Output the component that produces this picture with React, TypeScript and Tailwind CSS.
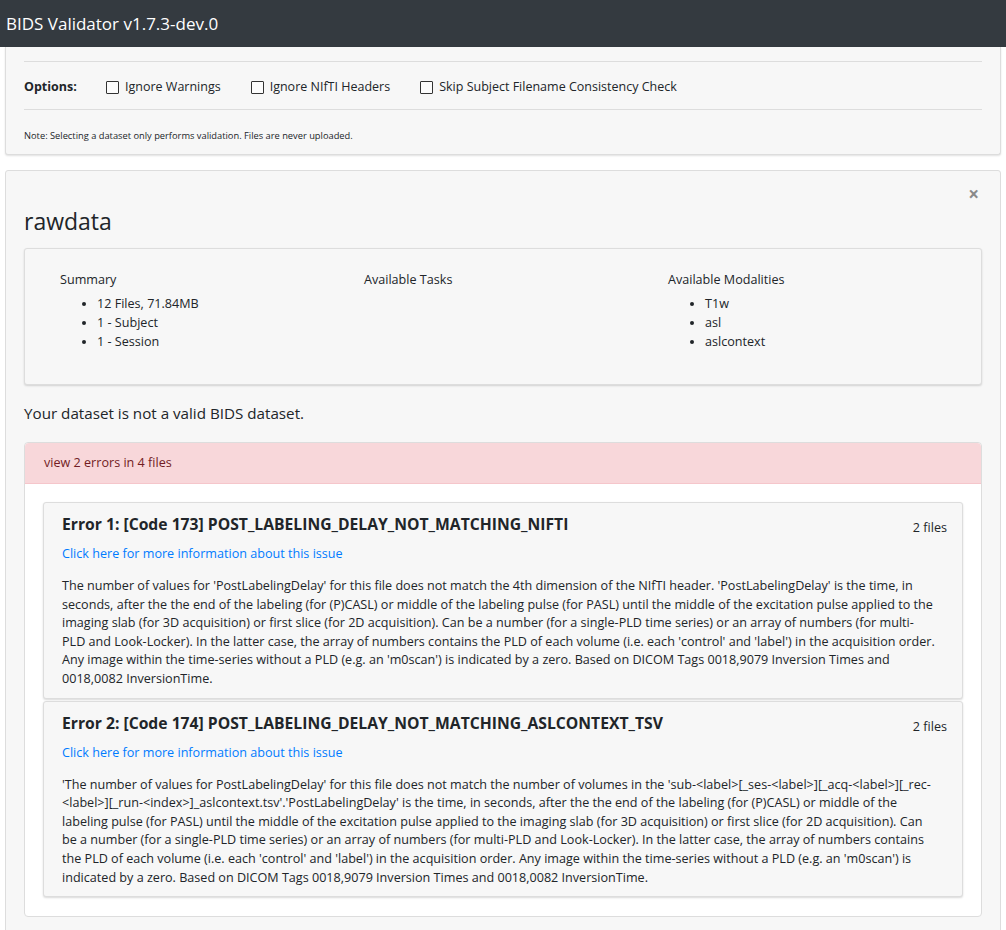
import React from "react";

const FONT = "font-['Open_Sans',sans-serif]";

// description lines are kept as the validator wrapped them
const ERRORS = [
  {
    title: "Error 1: [Code 173] POST_LABELING_DELAY_NOT_MATCHING_NIFTI",
    files: "2 files",
    lines: [
      "The number of values for 'PostLabelingDelay' for this file does not match the 4th dimension of the NIfTI header. 'PostLabelingDelay' is the time, in",
      "seconds, after the the end of the labeling (for (P)CASL) or middle of the labeling pulse (for PASL) until the middle of the excitation pulse applied to the",
      "imaging slab (for 3D acquisition) or first slice (for 2D acquisition). Can be a number (for a single-PLD time series) or an array of numbers (for multi-",
      "PLD and Look-Locker). In the latter case, the array of numbers contains the PLD of each volume (i.e. each 'control' and 'label') in the acquisition order.",
      "Any image within the time-series without a PLD (e.g. an 'm0scan') is indicated by a zero. Based on DICOM Tags 0018,9079 Inversion Times and",
      "0018,0082 InversionTime.",
    ],
  },
  {
    title: "Error 2: [Code 174] POST_LABELING_DELAY_NOT_MATCHING_ASLCONTEXT_TSV",
    files: "2 files",
    lines: [
      "'The number of values for PostLabelingDelay' for this file does not match the number of volumes in the 'sub-<label>[_ses-<label>][_acq-<label>][_rec-",
      "<label>][_run-<index>]_aslcontext.tsv'.'PostLabelingDelay' is the time, in seconds, after the the end of the labeling (for (P)CASL) or middle of the",
      "labeling pulse (for PASL) until the middle of the excitation pulse applied to the imaging slab (for 3D acquisition) or first slice (for 2D acquisition). Can",
      "be a number (for a single-PLD time series) or an array of numbers (for multi-PLD and Look-Locker). In the latter case, the array of numbers contains",
      "the PLD of each volume (i.e. each 'control' and 'label') in the acquisition order. Any image within the time-series without a PLD (e.g. an 'm0scan') is",
      "indicated by a zero. Based on DICOM Tags 0018,9079 Inversion Times and 0018,0082 InversionTime.",
    ],
  },
];

function Check({ label }: { label: string }) {
  return (
    <label className="flex items-center gap-[6px]">
      <span className="w-[13px] h-[13px] border border-[#333] bg-[#fcfcfc] rounded-[1px]" />
      <span>{label}</span>
    </label>
  );
}

function Column({ title, items }: { title: string; items: string[] }) {
  return (
    <div>
      <div className="leading-[19px]">{title}</div>
      <ul className="list-disc pl-[37px] mt-[5px] leading-[19px]">
        {items.map((i) => (
          <li key={i}>{i}</li>
        ))}
      </ul>
    </div>
  );
}

function ErrorCard({ title, files, lines }: { title: string; files: string; lines: string[] }) {
  return (
    <div className="bg-[#f7f7f7] border border-[#ddd] rounded-[3px] shadow-[0_1px_2px_rgba(0,0,0,0.15)] pl-[18px] pr-[2px] pt-[10px] pb-[9px]">
      <div className="flex items-start justify-between">
        <div className="text-[15.7px] font-bold text-[#212529] leading-[22px]">{title}</div>
        <div className="text-[12.6px] leading-[19px] mt-[5px] mr-[13px]">{files}</div>
      </div>
      <a className="block text-[#007bff] mt-[7px] leading-[19px]">Click here for more information about this issue</a>
      <p className="mt-[14px] leading-[18.6px] whitespace-nowrap">
        {lines.map((l, i) => (
          <span key={i} className="block">
            {l}
          </span>
        ))}
      </p>
    </div>
  );
}

export default function App() {
  return (
    <div className={`${FONT} min-h-screen bg-white text-[12.6px] text-[#212529]`}>
      <div className="h-[47px] bg-[#343a40] flex items-center pl-[6px]">
        <span className="text-white text-[17px]">BIDS Validator v1.7.3-dev.0</span>
      </div>

      {/* options card */}
      <div className="mx-[5px] bg-[#f7f7f7] border border-t-0 border-[#ddd] rounded-b-[3px] shadow-[0_1px_2px_rgba(0,0,0,0.12)] px-[18px] pt-[14px] pb-[12px]">
        <div className="border-t border-[#ddd]" />
        <div className="flex items-center h-[47px] pt-[3px] text-[12.5px]">
          <span className="font-bold w-[82px]">Options:</span>
          <div className="flex items-center gap-[30px]">
            <Check label="Ignore Warnings" />
            <Check label="Ignore NIfTI Headers" />
            <Check label="Skip Subject Filename Consistency Check" />
          </div>
        </div>
        <div className="border-t border-[#ddd]" />
        <div className="text-[9.3px] mt-[19px] leading-[13px]">
          Note: Selecting a dataset only performs validation. Files are never uploaded.
        </div>
      </div>

      {/* results card */}
      <div className="mx-[5px] mt-[15px] bg-[#f7f7f7] border border-[#ddd] rounded-[3px] px-[18px] pt-[12px] pb-[20px]">
        <div className="flex justify-end pr-[3px]">
          <span className="text-[#8a8a8a] text-[19px] leading-[22px] font-bold">×</span>
        </div>
        <h1 className="text-[23px] leading-[30px] mt-[1px] text-[#212529]">rawdata</h1>

        <div className="mt-[12px] border border-[#ddd] rounded-[3px] shadow-[0_1px_2px_rgba(0,0,0,0.15)] bg-[#f7f7f7] pl-[35px] pt-[21px] pb-[33px]">
          <div className="grid grid-cols-[304px_304px_304px]">
            <Column title="Summary" items={["12 Files, 71.84MB", "1 - Subject", "1 - Session"]} />
            <Column title="Available Tasks" items={[]} />
            <Column title="Available Modalities" items={["T1w", "asl", "aslcontext"]} />
          </div>
        </div>

        <div className="text-[15.2px] mt-[16px] leading-[24px]">Your dataset is not a valid BIDS dataset.</div>

        <div className="mt-[17px] border border-[#ddd] rounded-[4px] bg-white">
          <div className="bg-[#f8d7da] text-[#721c24] h-[41px] flex items-center px-[19px] rounded-t-[4px] border-b border-[#f5c6cb]">
            view 2 errors in 4 files
          </div>
          <div className="px-[18px] pt-[18px] pb-[19px] flex flex-col gap-[2px]">
            {ERRORS.map((e) => (
              <ErrorCard key={e.title} {...e} />
            ))}
          </div>
        </div>
      </div>
    </div>
  );
}
